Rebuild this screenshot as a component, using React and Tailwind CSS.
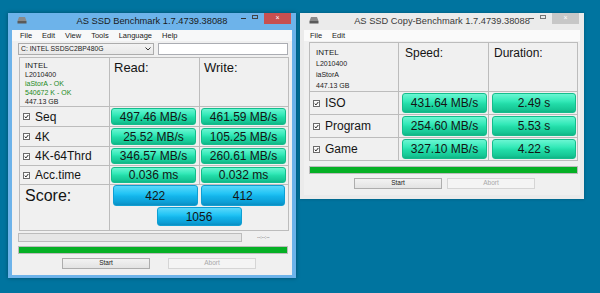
import React from "react";

const FONT = "font-['Liberation_Sans',Arial,sans-serif]";

function DriveIcon() {
  return (
    <svg width="10" height="8" viewBox="0 0 10 8">
      <path d="M2 1 H8 L9.5 5 H0.5 Z" fill="#8a8a8a" />
      <rect x="0.5" y="5" width="9" height="2.5" fill="#5a5a5a" />
    </svg>
  );
}

function TitleBar({ title, active }) {
  return (
    <div className="relative h-[17px] flex items-center justify-center">
      <div className="absolute left-[5px] top-[3px]">
        <DriveIcon />
      </div>
      <span className={`text-[9.3px] ${active ? "text-[#1a1a1a]" : "text-[#3a3a3a]"} leading-none mt-[1px]`}>{title}</span>
      <div className="absolute right-[1px] top-0 flex items-start">
        <div className="w-[12px] h-[10px] flex items-center justify-center">
          <div className={`w-[5px] h-[1px] ${active ? "bg-[#333]" : "bg-[#555]"}`} />
        </div>
        <div className="w-[12px] h-[10px] flex items-center justify-center">
          <div className={`w-[6px] h-[4px] border ${active ? "border-[#444]" : "border-[#777]"} mb-[2px]`} />
        </div>
        <div className={`ml-[3px] w-[27px] h-[11px] flex items-center justify-center text-white text-[7px] ${active ? "bg-[#c75050]" : "bg-[#c7c7c7]"}`}>
          ×
        </div>
      </div>
    </div>
  );
}

function CheckBox() {
  return (
    <svg width="7" height="7" viewBox="0 0 7 7" className="shrink-0">
      <rect x="0.5" y="0.5" width="6" height="6" fill="#fafafa" stroke="#6a6a6a" />
      <path d="M1.7 3.6 L3 4.9 L5.3 2" fill="none" stroke="#222" strokeWidth="1" />
    </svg>
  );
}

function Green({ children }) {
  return (
    <div className="h-full w-full rounded-[3px] border border-[#14bd8c] bg-[linear-gradient(to_bottom,#6af6d2_0%,#33e9b8_40%,#22dca8_55%,#16c896_85%,#10b586_100%)] flex items-center justify-center text-[12px] text-[#141414] leading-none">
      {children}
    </div>
  );
}

function Blue({ children }) {
  return (
    <div className="h-full w-full rounded-[3px] border border-[#0f9fd3] bg-[linear-gradient(to_bottom,#5ad8fb_0%,#22c4f5_40%,#13b4ea_55%,#0c9fd6_85%,#0a8ec2_100%)] flex items-center justify-center text-[12px] text-[#141414] leading-none">
      {children}
    </div>
  );
}

function Button({ children, disabled }) {
  return (
    <div
      className={`h-[11px] flex items-center justify-center text-[6.5px] leading-none border ${
        disabled
          ? "border-[#d5d5d5] bg-[#f4f4f4] text-[#a8a8a8]"
          : "border-[#adadad] bg-[linear-gradient(to_bottom,#f2f2f2,#e3e3e3)] text-[#222]"
      }`}
    >
      {children}
    </div>
  );
}

function Label({ children }) {
  return (
    <div className="h-full flex items-center pl-[3px] gap-[5px] bg-[#f0f0f0]">
      <CheckBox />
      <span className="text-[12px] text-[#141414] leading-none">{children}</span>
    </div>
  );
}

function LeftWindow() {
  const rows = [
    ["Seq", "497.46 MB/s", "461.59 MB/s"],
    ["4K", "25.52 MB/s", "105.25 MB/s"],
    ["4K-64Thrd", "346.57 MB/s", "260.61 MB/s"],
    ["Acc.time", "0.036 ms", "0.032 ms"],
  ];
  return (
    <div className="absolute left-[8px] top-[13px] w-[288px] h-[265px] bg-[#6db3ea] flex flex-col px-[4px] pb-[3px] shadow-[0_0_4px_rgba(0,0,0,0.35)]">
      <TitleBar active title="AS SSD Benchmark 1.7.4739.38088" />
      <div className="flex-1 bg-[#f0f0f0] flex flex-col">
        <div className="h-[11px] bg-[#f7f8f9] flex items-center gap-[10px] pl-[8px] text-[7.5px] text-[#1a1a1a] leading-none">
          <span>File</span>
          <span>Edit</span>
          <span>View</span>
          <span>Tools</span>
          <span>Language</span>
          <span>Help</span>
        </div>
        <div className="mt-[2px] flex items-center pl-[6px] gap-[4px]">
          <div className="w-[136px] h-[12px] border border-[#acacac] bg-[linear-gradient(to_bottom,#f3f3f3,#e8e8e8)] flex items-center justify-between px-[2px] text-[6.8px] text-[#1a1a1a] leading-none">
            <span>C: INTEL SSDSC2BP480G</span>
            <svg width="6" height="4" viewBox="0 0 6 4">
              <path d="M0.5 0.5 L3 3 L5.5 0.5" fill="none" stroke="#333" strokeWidth="1" />
            </svg>
          </div>
          <div className="w-[130px] h-[12px] border border-[#abadb3] bg-white" />
        </div>
        <div className="mt-[2px] ml-[7px] w-[270px] grid grid-cols-[89px_89px_88px] grid-rows-[48px_19px_19px_18px_18px_45px] gap-px p-px bg-[#bcbcbc]">
          <div className="bg-[#f0f0f0] pl-[5px] pt-[3px] leading-[9px] text-[7px]">
            <div className="text-[8px] text-[#1a1a1a]">INTEL</div>
            <div className="text-[#1a1a1a]">L2010400</div>
            <div className="text-[#1c8a1c]">iaStorA - OK</div>
            <div className="text-[#1c8a1c]">540672 K - OK</div>
            <div className="text-[#1a1a1a]">447.13 GB</div>
          </div>
          <div className="bg-[#f0f0f0] pl-[4px] pt-[3px] text-[13px] leading-none text-[#141414]">Read:</div>
          <div className="bg-[#f0f0f0] pl-[4px] pt-[3px] text-[13px] leading-none text-[#141414]">Write:</div>
          {rows.map((r) => (
            <React.Fragment key={r[0]}>
              <Label>{r[0]}</Label>
              <div className="bg-[#f0f0f0] pl-[1px] pr-[3px] py-[1px]">
                <Green>{r[1]}</Green>
              </div>
              <div className="bg-[#f0f0f0] pl-[1px] pr-[2px] py-[1px]">
                <Green>{r[2]}</Green>
              </div>
            </React.Fragment>
          ))}
          <div className="bg-[#f0f0f0] pl-[5px] pt-[3px] text-[16px] leading-none text-[#141414]">Score:</div>
          <div className="col-span-2 bg-[#f0f0f0] flex flex-col pt-[0px] pb-[3px] px-[3px] gap-[1px]">
            <div className="flex gap-[3px] h-[21px]">
              <div className="w-[85px]">
                <Blue>422</Blue>
              </div>
              <div className="w-[85px]">
                <Blue>412</Blue>
              </div>
            </div>
            <div className="flex justify-center h-[19px]">
              <div className="w-[85px]">
                <Blue>1056</Blue>
              </div>
            </div>
          </div>
        </div>
        <div className="mt-[2px] flex items-center pl-[6px]">
          <div className="w-[224px] h-[9px] border border-[#bcbcbc] bg-[#e6e6e6]" />
          <span className="ml-[15px] text-[5.5px] text-[#666] leading-none tracking-[-0.2px]">--:--:--</span>
        </div>
        <div className="mt-[4px] ml-[6px] w-[270px] h-[8px] bg-[#06b025] border border-[#bcbcbc]" />
        <div className="mt-[4px] flex pl-[50px]">
          <div className="w-[88px]">
            <Button>Start</Button>
          </div>
          <div className="w-[88px] ml-[18px]">
            <Button disabled>Abort</Button>
          </div>
        </div>
      </div>
    </div>
  );
}

function RightWindow() {
  const rows = [
    ["ISO", "431.64 MB/s", "2.49 s"],
    ["Program", "254.60 MB/s", "5.53 s"],
    ["Game", "327.10 MB/s", "4.22 s"],
  ];
  return (
    <div className="absolute left-[300px] top-[13px] w-[284px] h-[186px] bg-[#ebebeb] flex flex-col px-[4px] pb-[4px] shadow-[0_0_3px_rgba(0,0,0,0.25)]">
      <TitleBar title="AS SSD Copy-Benchmark 1.7.4739.38088" />
      <div className="flex-1 bg-[#f0f0f0] flex flex-col">
        <div className="h-[11px] bg-[#fafafa] flex items-center gap-[10px] pl-[6px] text-[7.5px] text-[#1a1a1a] leading-none">
          <span>File</span>
          <span>Edit</span>
        </div>
        <div className="mt-[1px] ml-[5px] w-[269px] grid grid-cols-[88px_89px_88px] grid-rows-[48px_22px_22px_22px] gap-px p-px bg-[#bcbcbc]">
          <div className="bg-[#f0f0f0] pl-[6px] pt-[4px] leading-[11px] text-[7px] text-[#1a1a1a]">
            <div className="text-[8px]">INTEL</div>
            <div>L2010400</div>
            <div>iaStorA</div>
            <div>447.13 GB</div>
          </div>
          <div className="bg-[#f0f0f0] pl-[6px] pt-[4px] text-[12px] leading-none text-[#141414]">Speed:</div>
          <div className="bg-[#f0f0f0] pl-[5px] pt-[4px] text-[12px] leading-none text-[#141414]">Duration:</div>
          {rows.map((r) => (
            <React.Fragment key={r[0]}>
              <Label>{r[0]}</Label>
              <div className="bg-[#f0f0f0] pl-[3px] pr-[1px] py-[1px]">
                <Green>{r[1]}</Green>
              </div>
              <div className="bg-[#f0f0f0] pl-[3px] pr-[1px] py-[1px]">
                <Green>{r[2]}</Green>
              </div>
            </React.Fragment>
          ))}
        </div>
        <div className="mt-[5px] ml-[5px] w-[269px] h-[8px] bg-[#06b025] border border-[#bcbcbc]" />
        <div className="mt-[4px] flex pl-[50px]">
          <div className="w-[88px]">
            <Button>Start</Button>
          </div>
          <div className="w-[88px] ml-[5px]">
            <Button disabled>Abort</Button>
          </div>
        </div>
      </div>
    </div>
  );
}

export default function App() {
  return (
    <div className={`relative w-[600px] h-[293px] overflow-hidden bg-[#00749f] ${FONT}`}>
      <LeftWindow />
      <RightWindow />
    </div>
  );
}
